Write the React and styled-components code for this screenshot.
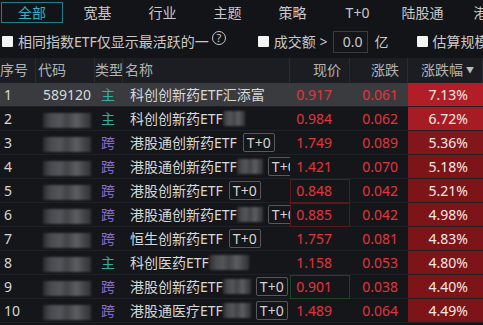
import React from "react";
import styled, { createGlobalStyle } from "styled-components";

const Global = createGlobalStyle`
  html, body { margin: 0; padding: 0; background: #131418; }
  body { font-family: "Noto Sans", "Noto Sans CJK SC", sans-serif; }
  * { box-sizing: border-box; }
`;

const Page = styled.div`
  width: 483px;
  height: 325px;
  overflow: hidden;
  background: #131418;
  color: #cfcfcf;
  font-size: 14px;
`;

const TabBar = styled.div`
  display: flex;
  height: 25px;
  padding-top: 2px;
  white-space: nowrap;
  overflow: hidden;
`;

const Tab = styled.div`
  flex: 0 0 auto;
  width: ${p => (p.$first ? 62 : 65)}px;
  margin-left: ${p => (p.$first ? 1 : 0)}px;
  margin-right: ${p => (p.$first ? 2 : 0)}px;
  height: 21px;
  line-height: 19px;
  text-align: center;
  font-size: 14px;
  color: ${p => (p.$active ? "#2fb3c4" : "#c9c9c9")};
  border: 1px solid ${p => (p.$active ? "#1b7f8e" : "transparent")};
`;

const FilterRow = styled.div`
  display: flex;
  align-items: center;
  height: 33px;
  white-space: nowrap;
  overflow: hidden;
  padding-left: 2px;
`;

const Check = styled.span`
  flex: 0 0 auto;
  width: 11px;
  height: 11px;
  background: #f4f4f4;
  border-radius: 1px;
  margin-right: 5px;
  margin-left: ${p => p.$ml || 0}px;
`;

const Label = styled.span`
  color: #c9c9c9;
  font-size: 14px;
  line-height: 20px;
`;

const Help = styled.span`
  flex: 0 0 auto;
  width: 14px;
  height: 14px;
  border: 1px solid #c9c9c9;
  border-radius: 50%;
  font-size: 11px;
  line-height: 12px;
  text-align: center;
  color: #c9c9c9;
  margin-left: 3px;
  transform: translateY(-4px);
`;

const NumInput = styled.span`
  flex: 0 0 auto;
  width: 35px;
  height: 22px;
  border: 1px solid #3a3c41;
  background: #141519;
  text-align: right;
  padding-right: 4px;
  line-height: 20px;
  color: #c9c9c9;
  margin: 0 7px 0 5px;
`;

const Grid = styled.div`
  display: grid;
  grid-template-columns: 36px 59px 28px 167px 60px 58px 75px;
`;

const HeadCell = styled.div`
  height: 25px;
  line-height: 24px;
  background: #1c1d22;
  color: #b3b3b3;
  font-size: 14px;
  border-right: 1px solid #2a2c31;
  text-align: ${p => p.$align || "left"};
  padding: ${p => (p.$align === "right" ? "0 8px 0 0" : `0 0 0 ${p.$pl ?? 2}px`)};
  white-space: nowrap;
  overflow: hidden;
  &:last-child { border-right: none; }
`;

const Arrow = styled.span`
  display: inline-block;
  font-size: 8px;
  margin-left: 3px;
  color: #bdbdbd;
  vertical-align: 2px;
`;

const Cell = styled.div`
  height: 24px;
  line-height: 23px;
  border-bottom: 1px solid #1f2126;
  background: ${p => p.$bg || (p.$hl ? "#3a3b3f" : "#15161a")};
  color: ${p => p.$color || "#d8d8d8"};
  text-align: ${p => p.$align || "left"};
  padding-left: ${p => p.$pl ?? 0}px;
  padding-right: ${p => p.$pr ?? 0}px;
  white-space: nowrap;
  overflow: hidden;
  font-size: 14px;
  outline: ${p => (p.$box ? `1px solid ${p.$box}` : "none")};
  outline-offset: -1px;
`;

const NameCell = styled(Cell)`
  display: flex;
  align-items: center;
`;

const Blur = styled.span`
  flex: 0 0 auto;
  display: inline-block;
  width: ${p => p.$w}px;
  height: 15px;
  margin-left: ${p => p.$ml || 0}px;
  vertical-align: middle;
  background: linear-gradient(
    90deg,
    #2c2e33 0%,
    #4d4f54 15%,
    #5c5d61 35%,
    #47484d 50%,
    #66676b 70%,
    #4a4b50 85%,
    #34363b 100%
  );
  filter: blur(1.2px);
  opacity: 0.9;
`;

const Badge = styled.span`
  flex: 0 0 auto;
  display: inline-block;
  height: 19px;
  line-height: 17px;
  padding: 0 3px;
  margin-left: ${p => p.$ml || 4}px;
  border: 1px solid #55585e;
  border-radius: 2px;
  color: #d4d4d4;
  font-size: 14px;
`;

const Type = styled.span`
  color: ${p => (p.$kind === "主" ? "#33b0a0" : "#8d6ad6")};
`;

const rows = [
  { n: 1, code: "589120", t: "主", name: "科创创新药ETF汇添富", p: "0.917", c: "0.061", pct: "7.13%", pbg: "#b21e27", hl: true },
  { n: 2, t: "主", name: "科创创新药ETF", blur: 22, p: "0.984", c: "0.062", pct: "6.72%", pbg: "#a71c24" },
  { n: 3, t: "跨", name: "港股通创新药ETF", badge: "T+0", p: "1.749", c: "0.089", pct: "5.36%", pbg: "#82161a" },
  { n: 4, t: "跨", name: "港股通创新药ETF", blur: 26, badge: "T+0", p: "1.421", c: "0.070", pct: "5.18%", pbg: "#7d1418" },
  { n: 5, t: "跨", name: "港股创新药ETF", badge: "T+0", p: "0.848", c: "0.042", pct: "5.21%", pbg: "#7d1418", box: "#5a181c" },
  { n: 6, t: "跨", name: "港股通创新药ETF", blur: 26, badge: "T+0", p: "0.885", c: "0.042", pct: "4.98%", pbg: "#7d1418", box: "#5a181c" },
  { n: 7, t: "跨", name: "恒生创新药ETF", badge: "T+0", p: "1.757", c: "0.081", pct: "4.83%", pbg: "#7d1418" },
  { n: 8, t: "主", name: "科创医药ETF", blur: 40, p: "1.158", c: "0.053", pct: "4.80%", pbg: "#7d1418" },
  { n: 9, t: "跨", name: "港股创新药ETF", blur: 28, badge: "T+0", p: "0.901", c: "0.038", pct: "4.40%", pbg: "#7d1418", box: "#1d4628" },
  { n: 10, t: "跨", name: "港股通医疗ETF", blur: 28, badge: "T+0", p: "1.489", c: "0.064", pct: "4.49%", pbg: "#7d1418" },
];

const tabs = ["全部", "宽基", "行业", "主题", "策略", "T+0", "陆股通", "港股"];

export default function App() {
  return (
    <Page>
      <Global />
      <TabBar>
        {tabs.map((t, i) => (
          <Tab key={t} $first={i === 0} $active={i === 0}>{t}</Tab>
        ))}
      </TabBar>
      <FilterRow>
        <Check />
        <Label>相同指数ETF仅显示最活跃的一</Label>
        <Help>?</Help>
        <Check $ml={32} />
        <Label>成交额 &gt;</Label>
        <NumInput>0.0</NumInput>
        <Label>亿</Label>
        <Check $ml={28} />
        <Label>估算规模</Label>
      </FilterRow>
      <Grid>
        <HeadCell $pl={0}>序号</HeadCell>
        <HeadCell>代码</HeadCell>
        <HeadCell $pl={0}>类型</HeadCell>
        <HeadCell>名称</HeadCell>
        <HeadCell $align="right">现价</HeadCell>
        <HeadCell $align="right">涨跌</HeadCell>
        <HeadCell $align="right">涨跌幅<Arrow>▼</Arrow></HeadCell>
        {rows.map(r => (
          <React.Fragment key={r.n}>
            <Cell $hl={r.hl} $pl={4}>{r.n}</Cell>
            <Cell $hl={r.hl} $pl={7}>
              {r.code ? r.code : <Blur $w={48} />}
            </Cell>
            <Cell $hl={r.hl} $pl={6}><Type $kind={r.t}>{r.t}</Type></Cell>
            <NameCell $hl={r.hl} $pl={7}>
              <span>{r.name}</span>
              {r.blur ? <Blur $w={r.blur} /> : null}
              {r.badge ? <Badge $ml={r.blur ? 5 : 6}>{r.badge}</Badge> : null}
            </NameCell>
            <Cell $hl={r.hl} $align="right" $pr={18} $color="#e5333c" $box={r.box}>{r.p}</Cell>
            <Cell $hl={r.hl} $align="right" $pr={10} $color="#e5333c">{r.c}</Cell>
            <Cell $bg={r.pbg} $align="right" $pr={15} $color="#f3e8e8">{r.pct}</Cell>
          </React.Fragment>
        ))}
      </Grid>
    </Page>
  );
}
